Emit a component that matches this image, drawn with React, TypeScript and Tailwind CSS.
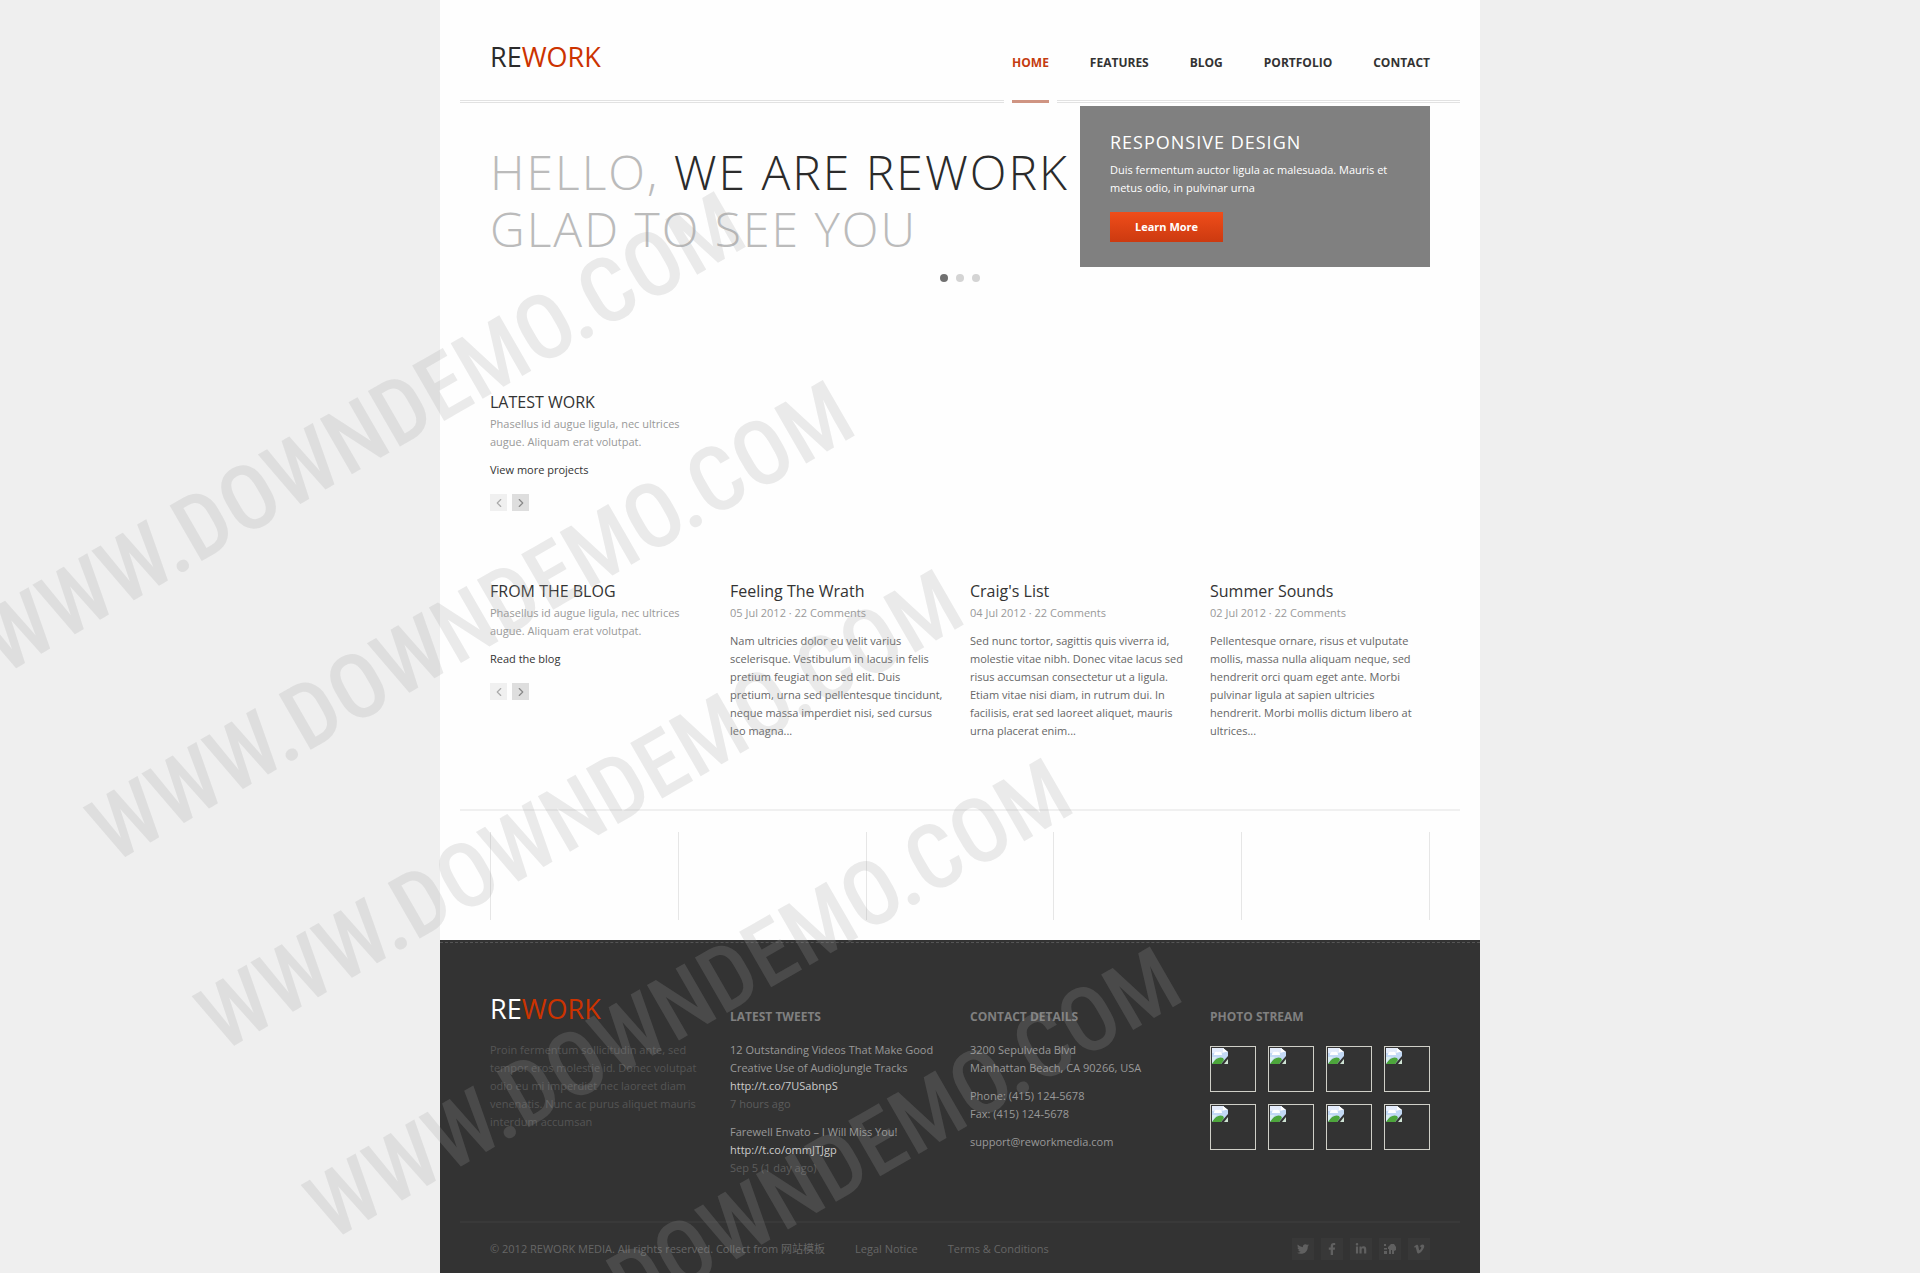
import React from "react";
import { ChevronLeft, ChevronRight } from "lucide-react";
import { FaTwitter, FaFacebookF, FaLinkedinIn, FaVimeoV } from "react-icons/fa";

const nav = ["Home", "Features", "Blog", "Portfolio", "Contact"];

const posts = [
  {
    title: "Feeling The Wrath",
    meta: "05 Jul 2012 · 22 Comments",
    body: "Nam ultricies dolor eu velit varius scelerisque. Vestibulum in lacus in felis pretium feugiat non sed elit. Duis pretium, urna sed pellentesque tincidunt, neque massa imperdiet nisi, sed cursus leo magna...",
  },
  {
    title: "Craig's List",
    meta: "04 Jul 2012 · 22 Comments",
    body: "Sed nunc tortor, sagittis quis viverra id, molestie vitae nibh. Donec vitae lacus sed risus accumsan consectetur ut a ligula. Etiam vitae nisi diam, in rutrum dui. In facilisis, erat sed laoreet aliquet, mauris urna placerat enim...",
  },
  {
    title: "Summer Sounds",
    meta: "02 Jul 2012 · 22 Comments",
    body: "Pellentesque ornare, risus et vulputate mollis, massa nulla aliquam neque, sed hendrerit orci quam eget ante. Morbi pulvinar ligula at sapien ultricies hendrerit. Morbi mollis dictum libero at ultrices...",
  },
];

function CommunityIcon({ size = 12 }: { size?: number }) {
  return (
    <svg width={size} height={size} viewBox="0 0 12 12" fill="currentColor">
      <rect x="0" y="1" width="2" height="2" />
      <rect x="0" y="5" width="3" height="1.5" />
      <rect x="0" y="8" width="3" height="3" />
      <path d="M4 4L7 1H10L12 4V7L10 8V11H8V7H7V11H5V6H4Z" />
    </svg>
  );
}

const social = [
  { name: "Twitter", Icon: FaTwitter },
  { name: "Facebook", Icon: FaFacebookF },
  { name: "LinkedIn", Icon: FaLinkedinIn },
  { name: "Community", Icon: CommunityIcon },
  { name: "Vimeo", Icon: FaVimeoV },
];

function Logo({ light = false }: { light?: boolean }) {
  return (
    <a
      href="#"
      className={
        light
          ? "block text-[27px] leading-9 text-white"
          : "block text-[27px] leading-9 text-[#2b2b2b]"
      }
    >
      RE<span className="text-[#cc3300]">WORK</span>
    </a>
  );
}

function Pager({ label }: { label: string }) {
  return (
    <div className="mt-[15px] flex gap-[5px]">
      <button aria-label={`Previous ${label}`} className="flex size-[17px] items-center justify-center bg-[#f0f0f0] text-[#aaa]">
        <ChevronLeft size={14} strokeWidth={2} />
      </button>
      <button aria-label={`Next ${label}`} className="flex size-[17px] items-center justify-center bg-[#dedede] text-[#888]">
        <ChevronRight size={14} strokeWidth={2} />
      </button>
    </div>
  );
}

function SectionIntro({ title, link }: { title: string; link: string }) {
  return (
    <div>
      <h2 className="text-base leading-6 text-[#333]">{title}</h2>
      <p className="mt-px pr-4 text-[#999]">Phasellus id augue ligula, nec ultrices augue. Aliquam erat volutpat.</p>
      <a href="#" className="mt-2.5 block text-[#333]">{link}</a>
      <Pager label={title.toLowerCase()} />
    </div>
  );
}

function MissingPhoto() {
  return (
    <a href="#" aria-label="Photo" className="block h-[46px] border border-[#d0d0c8] p-px">
      <svg width="16" height="16" viewBox="0 0 16 16">
        <path d="M0 0H11L16 4V8L9 16H0Z" fill="#c3d9f5" />
        <path d="M0 0H11L14 3L12 5H0Z" fill="#e4ecfb" />
        <path d="M2 6Q3 3 6 4Q10 3 10 7H2Z" fill="#fff" />
        <path d="M0 16Q5 8 11 10L12 12L9 16H0Z" fill="#4da63b" />
        <path d="M0 9H5L0 15Z" fill="#d9eef0" />
        <path d="M11 0V4H16Z" fill="#fff" />
        <path d="M16 11V16H12Z" fill="#cfe3d4" />
      </svg>
    </a>
  );
}

function FooterHeading({ children }: { children: React.ReactNode }) {
  return <h3 className="mt-[17px] text-xs leading-[18px] font-bold text-[#808080] uppercase">{children}</h3>;
}

function Watermark() {
  return (
    <div aria-hidden="true" className="pointer-events-none absolute inset-0 overflow-hidden">
      <div className="absolute top-[555px] left-[-66px] origin-top-left -rotate-30 font-['Roboto_Condensed',Roboto,sans-serif] text-[90px] leading-[218px] font-medium whitespace-nowrap text-[#a0a0a0]/21">
        {[1, 2, 3, 4, 5].map((n) => (
          <div key={n}>WWW.DOWNDEMO.COM</div>
        ))}
      </div>
    </div>
  );
}

export default function App() {
  return (
    <div className="relative min-h-screen bg-[#efefef] font-['Open_Sans','Noto_Sans_CJK_SC',sans-serif] text-[11px] leading-[18px] text-[#666]">
      <div className="mx-auto flex min-h-screen max-w-[1040px] flex-col bg-[#fefefe]">
        <header className="mx-5 flex items-end justify-between border-b-3 border-double border-[#e2e2e2] px-[30px] pt-[39px]">
          <div className="self-start">
            <Logo />
          </div>
          <nav className="-mb-[3px] flex gap-[41px] text-xs leading-[18px] font-bold uppercase">
            {nav.map((item, i) => (
              <a
                key={item}
                href="#"
                className={
                  i === 0
                    ? "relative border-b-3 border-[#cf9482] pt-[15px] pb-7 text-[#c43c10] before:absolute before:-inset-x-2 before:-bottom-[3px] before:h-[3px] before:border-x-8 before:border-[#fefefe]"
                    : "pt-[15px] pb-[31px] text-[#333]"
                }
              >
                {item}
              </a>
            ))}
          </nav>
        </header>

        <main className="px-[50px]">
          <section className="flex items-start justify-between">
            <h1 className="mt-10 text-5xl leading-[57px] font-light tracking-[2px] whitespace-nowrap text-[#bbb] uppercase">
              Hello, <span className="text-[#2b2b2b]">We are Rework</span>
              <br />
              Glad to see you
            </h1>
            <div className="mt-[3px] w-[350px] shrink-0 bg-[#808080] px-[30px] pt-6 pb-[25px] text-white">
              <h2 className="text-lg leading-6 tracking-[1px] uppercase">Responsive Design</h2>
              <p className="mt-[7px]">Duis fermentum auctor ligula ac malesuada. Mauris et metus odio, in pulvinar urna</p>
              <button className="mt-[15px] block h-[30px] bg-linear-to-b from-[#f04d1a] to-[#cc3a10] px-[25px] font-bold">
                Learn More
              </button>
            </div>
          </section>
          <div className="mt-[7px] flex justify-center gap-2">
            <button aria-label="Slide 1" className="size-2 rounded-full bg-[#707070]" />
            <button aria-label="Slide 2" className="size-2 rounded-full bg-[#d4d4d4]" />
            <button aria-label="Slide 3" className="size-2 rounded-full bg-[#d4d4d4]" />
          </div>

          <section className="mt-[108px] grid grid-cols-4 gap-5">
            <SectionIntro title="LATEST WORK" link="View more projects" />
          </section>

          <section className="mt-[68px] grid grid-cols-4 gap-5">
            <SectionIntro title="FROM THE BLOG" link="Read the blog" />
            {posts.map((p) => (
              <article key={p.title}>
                <h2 className="text-base leading-6 text-[#333]">{p.title}</h2>
                <p className="mt-px text-[#999]">{p.meta}</p>
                <p className="mt-2.5 pr-[5px]">{p.body}</p>
              </article>
            ))}
          </section>
        </main>

        <hr className="mx-5 mt-[69px] border-t-2 border-[#f0f0f0]" />
        <div className="mx-[50px] mt-[21px] mb-5 grid h-[88px] grid-cols-5 border-l border-[#e6e6e6]">
          {[1, 2, 3, 4, 5].map((n) => (
            <div key={n} className="border-r border-[#e6e6e6]" />
          ))}
        </div>

        <footer className="flex-1 bg-[#333] pt-0.5 text-[#999]">
          <div className="border-t border-dashed border-[#555]" />
          <div className="grid grid-cols-4 gap-5 px-[50px] pt-12">
            <div>
              <Logo light />
              <p className="mt-3.5 text-[#555]">
                Proin fermentum sollicitudin ante, sed tempor eros molestie id. Donec volutpat odio eu mi imperdiet nec laoreet diam venenatis. Nunc ac purus aliquet mauris interdum accumsan
              </p>
            </div>
            <div>
              <FooterHeading>Latest Tweets</FooterHeading>
              <p className="mt-[15px]">
                12 Outstanding Videos That Make Good Creative Use of AudioJungle Tracks
                <a href="#" className="block text-[#ccc]">http://t.co/7USabnpS</a>
                <span className="text-[#5c5c5c]">7 hours ago</span>
              </p>
              <p className="mt-2.5">
                Farewell Envato – I Will Miss You!
                <a href="#" className="block text-[#ccc]">http://t.co/ommJTJgp</a>
                <span className="text-[#5c5c5c]">Sep 5 (1 day ago)</span>
              </p>
            </div>
            <div>
              <FooterHeading>Contact Details</FooterHeading>
              <address className="mt-[15px] not-italic">
                <p>3200 Sepulveda Blvd<br />Manhattan Beach, CA 90266, USA</p>
                <p className="mt-2.5">Phone: (415) 124-5678<br />Fax: (415) 124-5678</p>
                <a href="#" className="mt-2.5 block">support@reworkmedia.com</a>
              </address>
            </div>
            <div>
              <FooterHeading>Photo Stream</FooterHeading>
              <div className="mt-5 grid grid-cols-4 gap-3">
                {[1, 2, 3, 4, 5, 6, 7, 8].map((n) => (
                  <MissingPhoto key={n} />
                ))}
              </div>
            </div>
          </div>
          <div className="mx-5 mt-11 flex items-center justify-between border-t-2 border-[#393939] px-[30px] pt-[15px] pb-[13px] text-[#666]">
            <div className="flex gap-[30px]">
              <span>© 2012 REWORK MEDIA. All rights reserved. Collect from 网站模板</span>
              <a href="#">Legal Notice</a>
              <a href="#">Terms &amp; Conditions</a>
            </div>
            <div className="flex gap-[7px]">
              {social.map(({ name, Icon }) => (
                <a key={name} href="#" aria-label={name} className="flex size-[22px] items-center justify-center bg-[#383838] text-[#606060]">
                  <Icon size={12} />
                </a>
              ))}
            </div>
          </div>
        </footer>
      </div>
      <Watermark />
    </div>
  );
}
